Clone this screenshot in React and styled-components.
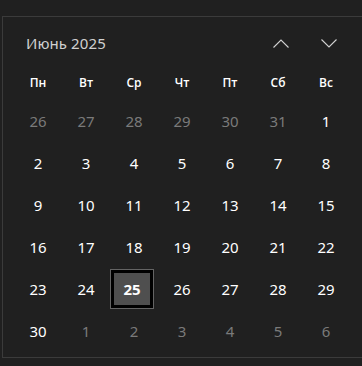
import React from 'react'
import styled, { createGlobalStyle } from 'styled-components'

const GlobalStyle = createGlobalStyle`
  html, body {
    margin: 0;
    padding: 0;
    background: #202020;
  }
  body {
    width: 362px;
    height: 366px;
    overflow: hidden;
    font-family: "Noto Sans", "Open Sans", sans-serif;
  }
`

const Panel = styled.div`
  margin-top: 16px;
  margin-left: 2px;
  border-top: 1px solid #3b3b3b;
  border-left: 1px solid #3b3b3b;
  border-bottom: 1px solid #3b3b3b;
  padding: 0 9px 5px 11px;
`

const Header = styled.div`
  height: 52px;
  display: flex;
  align-items: center;
`

const Title = styled.div`
  flex: 1;
  padding-left: 12px;
  color: #d0d0d0;
  font-size: 15px;
  letter-spacing: 0.1px;
`

const NavButton = styled.button`
  width: 48px;
  height: 40px;
  border: none;
  background: transparent;
  padding: 0;
  display: flex;
  align-items: center;
  justify-content: center;
  color: #d2d2d2;
`

const Grid = styled.div`
  display: grid;
  grid-template-columns: repeat(7, 48px);
`

const WeekDays = styled(Grid)`
  height: 27px;
  margin-bottom: 4px;
  align-items: center;
`

const WeekDay = styled.div`
  text-align: center;
  color: #ffffff;
  font-family: "Open Sans", "Noto Sans", sans-serif;
  font-size: 12px;
  font-weight: 600;
`

const Day = styled.div`
  height: 42px;
  display: flex;
  align-items: center;
  justify-content: center;
`

const DayNumber = styled.div`
  box-sizing: border-box;
  display: flex;
  align-items: center;
  justify-content: center;
  font-size: 15px;
  color: ${p => (p.$muted ? '#7a7a7a' : '#ffffff')};
  font-weight: ${p => (p.$selected ? 700 : 400)};

  ${p => p.$selected && `
    width: 42px;
    height: 38px;
    margin-left: -4px;
    background: #4f4f4f;
    border: 3px solid #000;
    outline: 1px solid #646464;
  `}
`

const Chevron = ({ up }) => (
  <svg width="16" height="9" viewBox="0 0 16 9" fill="none">
    <path
      d={up ? 'M0.5 8.5 L8 1 L15.5 8.5' : 'M0.5 0.5 L8 8 L15.5 0.5'}
      stroke="currentColor"
      strokeWidth="1.1"
    />
  </svg>
)

const weekDays = ['Пн', 'Вт', 'Ср', 'Чт', 'Пт', 'Сб', 'Вс']

const days = [
  ...[26, 27, 28, 29, 30, 31].map(n => ({ n, muted: true })),
  ...Array.from({ length: 30 }, (_, i) => ({ n: i + 1, muted: false })),
  ...[1, 2, 3, 4, 5, 6].map(n => ({ n, muted: true })),
]

export default function App() {
  return (
    <>
      <GlobalStyle />
      <Panel>
        <Header>
          <Title>Июнь 2025</Title>
          <NavButton><Chevron up /></NavButton>
          <NavButton><Chevron /></NavButton>
        </Header>
        <WeekDays>
          {weekDays.map(d => <WeekDay key={d}>{d}</WeekDay>)}
        </WeekDays>
        <Grid>
          {days.map((d, i) => {
            const selected = !d.muted && d.n === 25
            return (
              <Day key={i}>
                <DayNumber $muted={d.muted} $selected={selected}>{d.n}</DayNumber>
              </Day>
            )
          })}
        </Grid>
      </Panel>
    </>
  )
}
